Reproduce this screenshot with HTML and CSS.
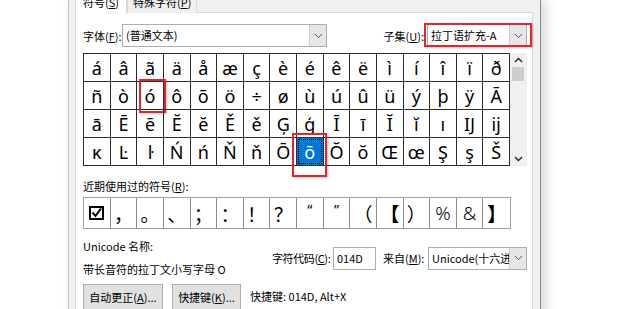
FILE: index.html
```html
<html lang="zh-CN">
<head>
    <meta charset="UTF-8">
    <title>符号</title>
    <link rel="stylesheet" href="styles.css">
</head>
<body>
    <div class="dialog">
        <div class="tabs">
            <div class="tab active">符号(<u>S</u>)</div>
            <div class="tab">特殊字符(<u>P</u>)</div>
        </div>
        <div class="panel">
            <div class="font-row">
                <div class="lbl-font">字体(<u>F</u>):</div>
                <div class="combo font-combo">
                    <span class="val">(普通文本)</span>
                    <span class="drop"><svg width="9" height="6" viewBox="0 0 9 6"><path d="M1 1 L4.5 4.5 L8 1" fill="none" stroke="#555" stroke-width="1"/></svg></span>
                </div>
                <div class="lbl-subset">子集(<u>U</u>):</div>
                <div class="combo subset-combo">
                    <span class="val">拉丁语扩充-A</span>
                    <span class="drop"><svg width="9" height="6" viewBox="0 0 9 6"><path d="M1 1 L4.5 4.5 L8 1" fill="none" stroke="#555" stroke-width="1"/></svg></span>
                    <span class="mark mark-subset"></span>
                </div>
            </div>

            <div class="chars">
                <div class="grid">
                    <div class="cell">á</div><div class="cell">â</div><div class="cell">ã</div><div class="cell">ä</div>
                    <div class="cell">å</div><div class="cell">æ</div><div class="cell">ç</div><div class="cell">è</div>
                    <div class="cell">é</div><div class="cell">ê</div><div class="cell">ë</div><div class="cell">ì</div>
                    <div class="cell">í</div><div class="cell">î</div><div class="cell">ï</div><div class="cell">ð</div>

                    <div class="cell">ñ</div><div class="cell">ò</div><div class="cell">ó<span class="mark mark-o"></span></div><div class="cell">ô</div>
                    <div class="cell">õ</div><div class="cell">ö</div><div class="cell">÷</div><div class="cell">ø</div>
                    <div class="cell">ù</div><div class="cell">ú</div><div class="cell">û</div><div class="cell">ü</div>
                    <div class="cell">ý</div><div class="cell">þ</div><div class="cell">ÿ</div><div class="cell">Ā</div>

                    <div class="cell">ā</div><div class="cell">Ē</div><div class="cell">ē</div><div class="cell">Ĕ</div>
                    <div class="cell">ĕ</div><div class="cell">Ě</div><div class="cell">ě</div><div class="cell">Ģ</div>
                    <div class="cell">ģ</div><div class="cell">Ī</div><div class="cell">ī</div><div class="cell">Ĭ</div>
                    <div class="cell">ĭ</div><div class="cell">ı</div><div class="cell">Ĳ</div><div class="cell">ĳ</div>

                    <div class="cell">ĸ</div><div class="cell">Ŀ</div><div class="cell">ŀ</div><div class="cell">Ń</div>
                    <div class="cell">ń</div><div class="cell">Ň</div><div class="cell">ň</div><div class="cell">Ō</div>
                    <div class="cell selected"><span class="focus">ō</span><span class="mark mark-sel"></span></div><div class="cell">Ŏ</div><div class="cell">ŏ</div><div class="cell">Œ</div>
                    <div class="cell">œ</div><div class="cell">Ş</div><div class="cell">ş</div><div class="cell">Š</div>
                </div>
                <div class="scrollbar">
                    <div class="sb-btn"><svg width="9" height="6" viewBox="0 0 9 6"><path d="M1 5 L4.5 1.5 L8 5" fill="none" stroke="#222" stroke-width="1.4"/></svg></div>
                    <div class="sb-thumb"></div>
                    <div class="sb-track"></div>
                    <div class="sb-btn"><svg width="9" height="6" viewBox="0 0 9 6"><path d="M1 1 L4.5 4.5 L8 1" fill="none" stroke="#222" stroke-width="1.4"/></svg></div>
                </div>
            </div>

            <div class="recent-label">近期使用过的符号(<u>R</u>):</div>
            <div class="recent">
                <div class="rcell"><svg width="15" height="14" viewBox="0 0 15 14"><rect x="1" y="1" width="13" height="12" fill="none" stroke="#000" stroke-width="2"/><path d="M3.5 6.5 L6.5 10 L12 2.5" fill="none" stroke="#000" stroke-width="2"/></svg></div>
                <div class="rcell">，</div>
                <div class="rcell">。</div>
                <div class="rcell">、</div>
                <div class="rcell">；</div>
                <div class="rcell">：</div>
                <div class="rcell">！</div>
                <div class="rcell">？</div>
                <div class="rcell quote">“</div>
                <div class="rcell quote">”</div>
                <div class="rcell">（</div>
                <div class="rcell bold">【</div>
                <div class="rcell">）</div>
                <div class="rcell lat">%</div>
                <div class="rcell lat">&amp;</div>
                <div class="rcell bold">】</div>
            </div>

            <div class="info-row">
                <div class="name">
                    <div>Unicode 名称:</div>
                    <div>带长音符的拉丁文小写字母 O</div>
                </div>
                <div class="lbl-code">字符代码(<u>C</u>):</div>
                <div class="code-input">014D</div>
                <div class="lbl-from">来自(<u>M</u>):</div>
                <div class="combo from-combo">
                    <span class="val">Unicode(十六进制)</span>
                    <span class="drop"><svg width="9" height="6" viewBox="0 0 9 6"><path d="M1 1 L4.5 4.5 L8 1" fill="none" stroke="#555" stroke-width="1"/></svg></span>
                </div>
            </div>

            <div class="button-row">
                <button class="btn btn-auto">自动更正(<u>A</u>)...</button>
                <button class="btn btn-key">快捷键(<u>K</u>)...</button>
                <span class="shortcut">快捷键: 014D, Alt+X</span>
            </div>
        </div>
    </div>
</body>
</html>
```

FILE: styles.css
```css
/* Fenêtre Symbole */
body {
    margin: 0;
    padding: 0;
    background: #fff;
    font-family: "Noto Sans CJK SC", sans-serif;
    font-size: 11px;
    color: #000;
    height: 309px;
    overflow: hidden;
}
u {
    text-decoration: underline;
    text-underline-offset: 1px;
}
.dialog {
    display: flow-root;
    margin-left: 68px;
    width: 473px;
    height: 330px;
    box-sizing: border-box;
    background: #f0f0f0;
    border-left: 1px solid #c4c4c4;
    border-right: 1px solid #8a8a8a;
    padding: 0 7px 0 6px;
    box-shadow: 5px 0 12px rgba(0, 0, 0, 0.16);
}
.tabs {
    display: flex;
    height: 23px;
    margin-top: -10px;
    margin-bottom: -1px;
}
.tab {
    position: relative;
    box-sizing: border-box;
    height: 23px;
    padding: 3px 5px 0;
    line-height: 17px;
    border: 1px solid #d9d9d9;
    border-bottom: none;
    background: #f0f0f0;
    white-space: nowrap;
}
.tab.active {
    z-index: 1;
    padding: 3px 7px 0;
    background: #fff;
    height: 24px;
}
.panel {
    background: #fff;
    border: 1px solid #d9d9d9;
    padding: 11px 5px 0 7px;
    height: 400px;
}
.font-row {
    display: flex;
    align-items: center;
    height: 23px;
}
.lbl-font {
    width: 39px;
    white-space: nowrap;
}
.lbl-subset {
    margin-left: auto;
    margin-right: 3px;
    white-space: nowrap;
}
.combo {
    position: relative;
    display: flex;
    align-items: center;
    height: 23px;
    box-sizing: border-box;
    border: 1px solid #abadb3;
    background: #fff;
}
.combo .val {
    flex: 1;
    padding-left: 3px;
    white-space: nowrap;
    overflow: hidden;
    line-height: 21px;
}
.combo .drop {
    width: 16px;
    height: 100%;
    flex: none;
    display: flex;
    align-items: center;
    justify-content: center;
    background: #e6e6e6;
    border-left: 1px solid #cfcfcf;
}
.font-combo {
    width: 205px;
}
.subset-combo {
    width: 100px;
}
.from-combo {
    width: 99px;
}
/* Cadres rouges d'annotation */
.mark {
    position: absolute;
    box-sizing: border-box;
    border: 2px solid #e3262d;
    box-shadow: 1px 1px 2px rgba(0, 0, 0, 0.25);
    pointer-events: none;
}
.mark-subset {
    left: -4px;
    top: -2px;
    right: -6px;
    bottom: -1px;
}
.mark-o {
    left: 2px;
    top: -3px;
    width: 27px;
    height: 34px;
}
.mark-sel {
    left: -5px;
    top: -5px;
    width: 35px;
    height: 44px;
    z-index: 2;
}
.chars {
    display: flex;
    margin-top: 6px;
}
.grid {
    display: grid;
    grid-template-columns: repeat(16, 1fr);
    width: 427px;
    box-sizing: border-box;
    border-top: 1px solid #2b2b2b;
    border-left: 1px solid #2b2b2b;
}
.cell {
    position: relative;
    height: 28px;
    box-sizing: border-box;
    border-right: 1px solid #2b2b2b;
    border-bottom: 1px solid #2b2b2b;
    display: flex;
    align-items: center;
    justify-content: center;
    font-family: "Noto Sans", sans-serif;
    font-size: 18px;
    line-height: 1;
}
.cell.selected {
    background: #0078d7;
    color: #fff;
}
.focus {
    position: absolute;
    inset: 1px;
    display: flex;
    align-items: center;
    justify-content: center;
    border: 1px dotted #000;
}
.scrollbar {
    width: 17px;
    height: 113px;
    background: #f0f0f0;
    display: flex;
    flex-direction: column;
}
.sb-btn {
    height: 14px;
    display: flex;
    align-items: center;
    justify-content: center;
}
.sb-thumb {
    height: 14px;
    margin: 0 3px 0 2px;
    background: #cdcdcd;
}
.sb-track {
    flex: 1;
}
.recent-label {
    margin-top: 12px;
    line-height: 16px;
}
.recent {
    display: grid;
    grid-template-columns: repeat(16, 1fr);
    width: 428px;
    height: 32px;
    box-sizing: border-box;
    margin-top: 3px;
    border: 1px solid #a0a0a0;
}
.rcell {
    display: flex;
    align-items: center;
    justify-content: center;
    border-right: 1px solid #8c8c8c;
    font-size: 19px;
    line-height: 1;
}
.rcell:last-child {
    border-right: none;
}
.rcell.lat {
    font-family: "Noto Sans", sans-serif;
    font-weight: 300;
}
.rcell.quote {
    align-items: flex-start;
    padding-top: 5px;
    font-family: "Noto Sans", sans-serif;
    font-size: 14px;
}
.rcell.bold {
    font-weight: bold;
}
.info-row {
    display: flex;
    align-items: center;
    margin-top: 6px;
    height: 46px;
}
.name {
    width: 189px;
    line-height: 23px;
}
.lbl-code {
    width: 61px;
    white-space: nowrap;
    letter-spacing: -0.4px;
}
.code-input {
    width: 43px;
    height: 23px;
    box-sizing: border-box;
    border: 1px solid #abadb3;
    background: #fff;
    padding-left: 3px;
    line-height: 21px;
}
.lbl-from {
    width: 45px;
    margin-left: 7px;
    white-space: nowrap;
}
.button-row {
    display: flex;
    align-items: flex-start;
    gap: 9px;
    margin-top: 3px;
}
.btn {
    height: 26px;
    padding: 0;
    border: 1px solid #adadad;
    background: #e1e1e1;
    font-family: "Noto Sans CJK SC", sans-serif;
    font-size: 11px;
    color: #000;
}
.btn-auto {
    width: 80px;
}
.btn-key {
    width: 69px;
}
.shortcut {
    line-height: 25px;
}
```
